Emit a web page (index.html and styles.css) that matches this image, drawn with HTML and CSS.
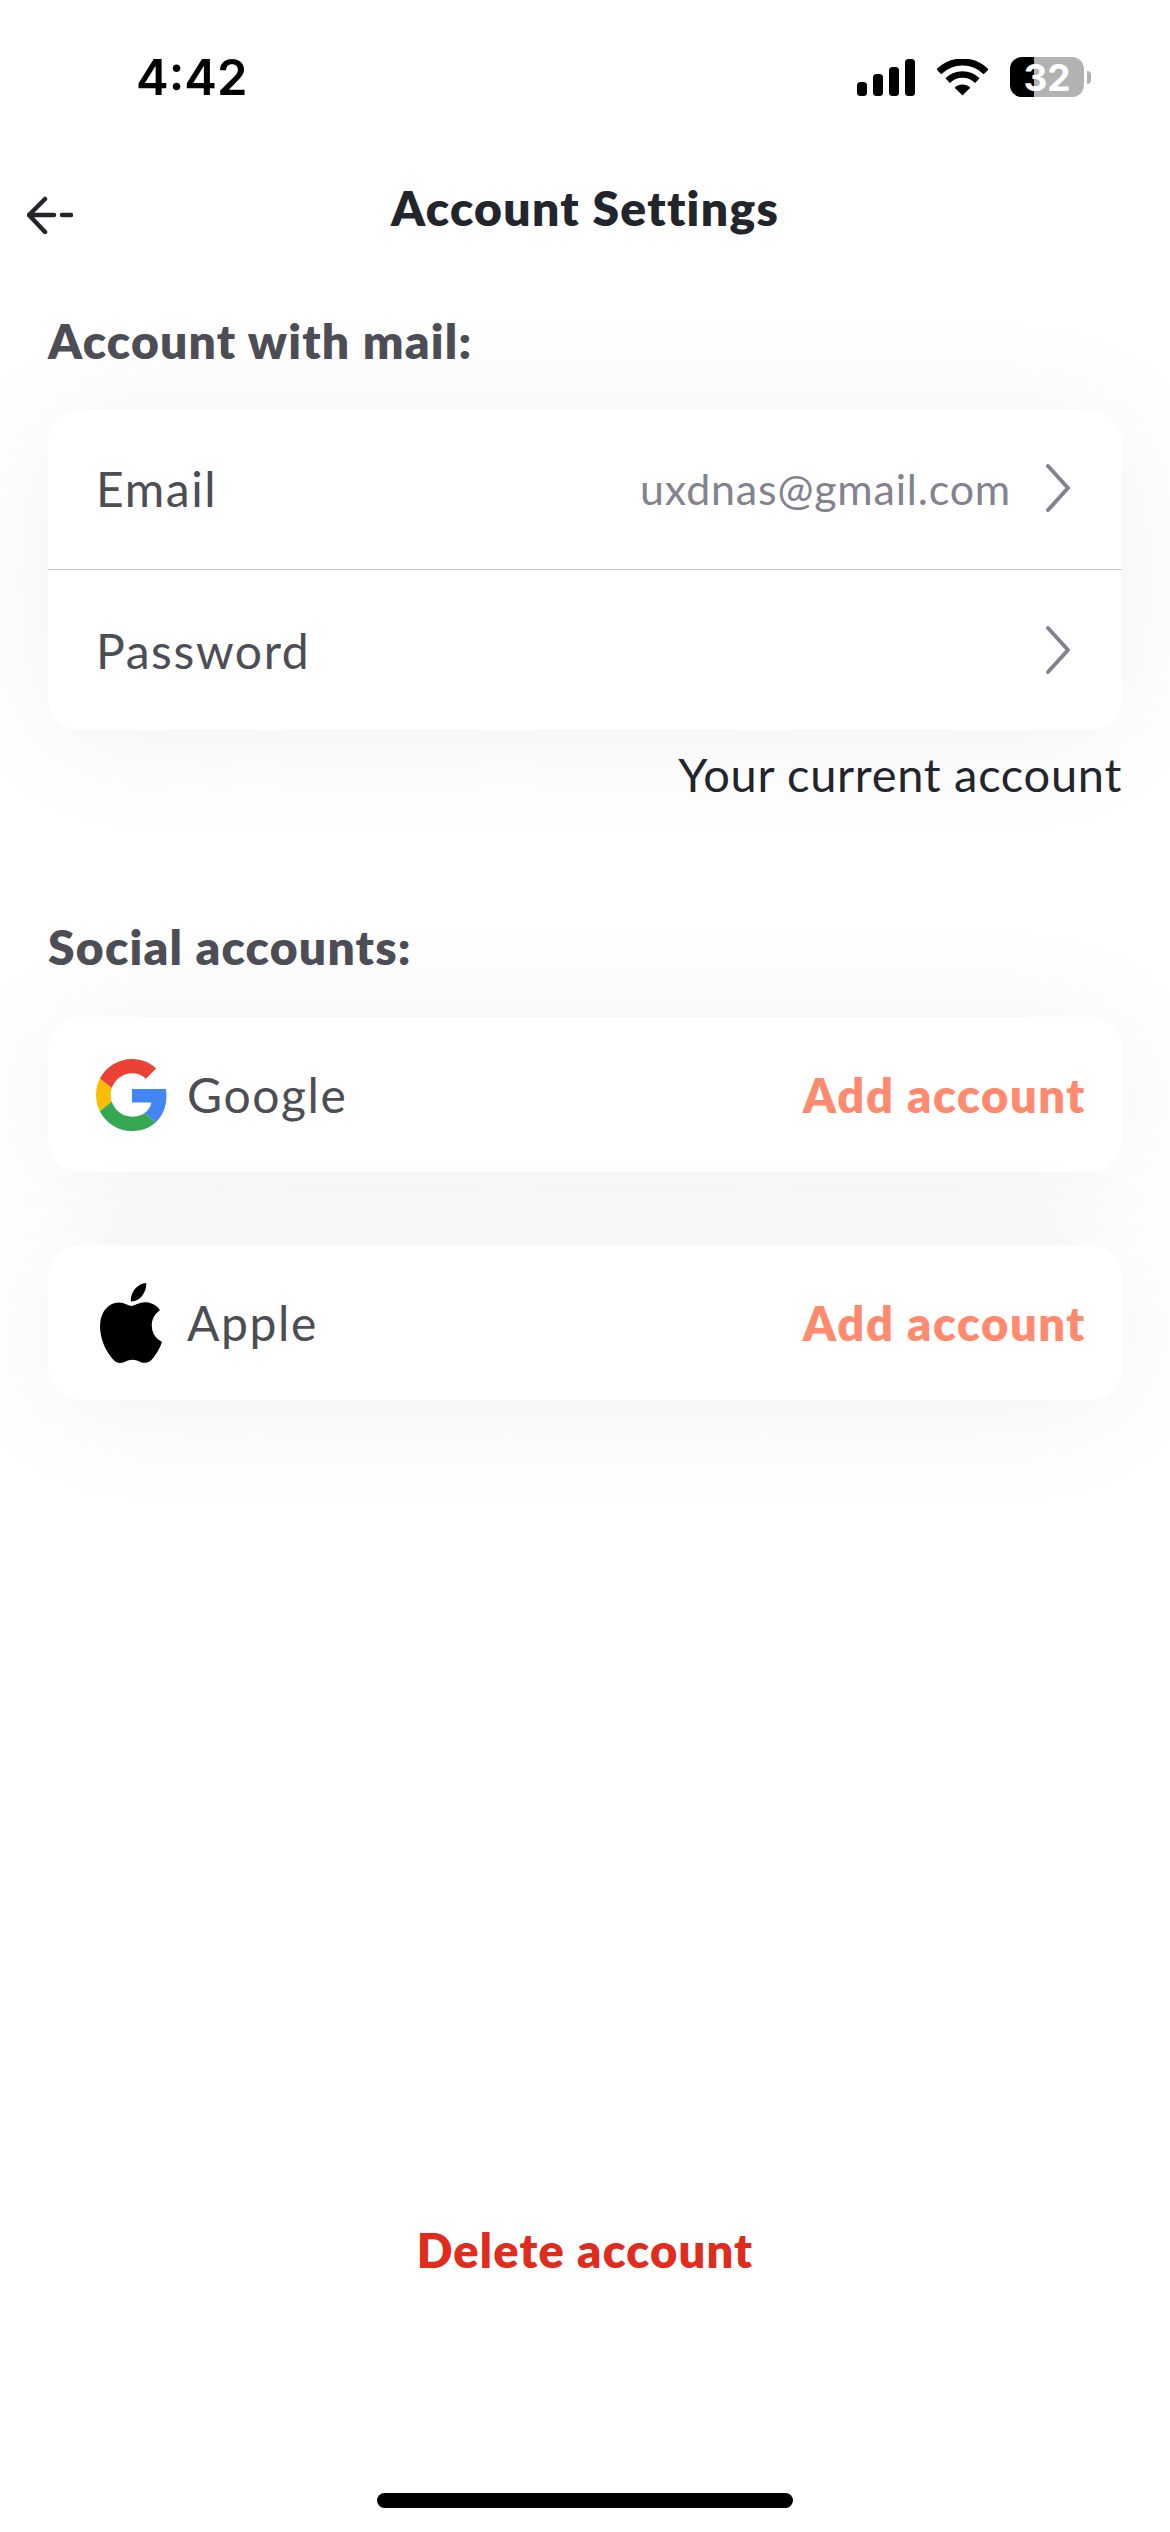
FILE: index.html
```html
<!DOCTYPE html>
<html lang="en">
<head>
  <meta charset="UTF-8" />
  <meta name="viewport" content="width=device-width, initial-scale=1" />
  <title>Account Settings</title>
  <link rel="stylesheet" href="styles.css">
</head>
<body>
  <div class="status-bar">
    <span class="time">4:42</span>
    <div class="status-icons">
      <svg class="signal" width="58" height="37" viewBox="0 0 58 37">
        <rect x="0" y="23" width="10" height="14" rx="3.5" />
        <rect x="16" y="15" width="10" height="22" rx="3.5" />
        <rect x="32" y="8" width="10" height="29" rx="3.5" />
        <rect x="48" y="0" width="10" height="37" rx="3.5" />
      </svg>
      <svg class="wifi" width="51" height="37" viewBox="0 0 51 37">
        <path d="M1.8 12.8A33.5 33.5 0 0 1 49.2 12.8" fill="none" stroke="#000" stroke-width="7" />
        <path d="M10.65 21.65A21 21 0 0 1 40.35 21.65" fill="none" stroke="#000" stroke-width="6.5" />
        <path d="M25.5 36.5L17.7 28.7A11 11 0 0 1 33.3 28.7Z" />
      </svg>
      <div class="battery">
        <div class="battery-body">
          <div class="battery-level"></div>
          <span class="battery-text">32</span>
        </div>
        <div class="battery-nub"></div>
      </div>
    </div>
  </div>

  <header class="nav">
    <svg class="back" width="46" height="38" viewBox="0 0 46 38">
      <path d="M18 3L2 19L18 36M2 19H27M35 19H44" fill="none" stroke="#22252c" stroke-width="4.5" stroke-linecap="round" stroke-linejoin="round" />
    </svg>
    <h1>Account Settings</h1>
  </header>

  <main>
    <h2 class="first">Account with mail:</h2>
    <section class="card">
      <div class="row row-line">
        <span class="label">Email</span>
        <span class="value">uxdnas@gmail.com</span>
        <svg class="chevron" width="26" height="50" viewBox="0 0 26 50">
          <path d="M3 3L23 25L3 47" fill="none" stroke="#82838f" stroke-width="4" stroke-linecap="round" stroke-linejoin="round" />
        </svg>
      </div>
      <div class="row">
        <span class="label">Password</span>
        <svg class="chevron" width="26" height="50" viewBox="0 0 26 50">
          <path d="M3 3L23 25L3 47" fill="none" stroke="#82838f" stroke-width="4" stroke-linecap="round" stroke-linejoin="round" />
        </svg>
      </div>
    </section>
    <p class="current">Your current account</p>

    <h2 class="social">Social accounts:</h2>
    <section class="card social-card">
      <svg class="logo" width="72" height="72" viewBox="0 0 48 48">
        <path fill="#EA4335" d="M24 9.5c3.54 0 6.71 1.22 9.21 3.6l6.85-6.85C35.9 2.38 30.47 0 24 0 14.62 0 6.51 5.38 2.56 13.22l7.98 6.19C12.43 13.72 17.74 9.5 24 9.5z"/>
        <path fill="#4285F4" d="M46.98 24.55c0-1.57-.15-3.09-.38-4.55H24v9.02h12.94c-.58 2.96-2.26 5.48-4.78 7.18l7.73 6c4.51-4.18 7.09-10.36 7.09-17.65z"/>
        <path fill="#FBBC05" d="M10.53 28.59c-.48-1.45-.76-2.99-.76-4.59s.27-3.14.76-4.59l-7.98-6.19C.92 16.46 0 20.12 0 24c0 3.88.92 7.54 2.56 10.78l7.97-6.19z"/>
        <path fill="#34A853" d="M24 48c6.48 0 11.93-2.13 15.89-5.81l-7.73-6c-2.15 1.45-4.92 2.3-8.16 2.3-6.26 0-11.57-4.22-13.47-9.91l-7.98 6.19C6.51 42.62 14.62 48 24 48z"/>
      </svg>
      <span class="label">Google</span>
      <span class="add">Add account</span>
    </section>
    <section class="card social-card">
      <svg class="logo logo-apple" width="76" height="80" viewBox="0 0 24 24" preserveAspectRatio="none">
        <path d="M12.152 6.896c-.948 0-2.415-1.078-3.96-1.04-2.04.027-3.91 1.183-4.961 3.014-2.117 3.675-.546 9.103 1.519 12.09 1.013 1.454 2.208 3.09 3.792 3.039 1.52-.065 2.09-.987 3.935-.987 1.831 0 2.35.987 3.96.948 1.637-.026 2.676-1.48 3.676-2.948 1.156-1.688 1.636-3.325 1.662-3.415-.039-.013-3.182-1.221-3.22-4.857-.026-3.04 2.48-4.494 2.597-4.559-1.429-2.09-3.623-2.324-4.39-2.376-2-.156-3.675 1.09-4.61 1.09zM15.53 3.83c.843-1.012 1.4-2.427 1.245-3.83-1.207.052-2.662.805-3.532 1.818-.78.896-1.454 2.338-1.273 3.714 1.338.104 2.715-.688 3.559-1.701"/>
      </svg>
      <span class="label">Apple</span>
      <span class="add">Add account</span>
    </section>
  </main>

  <footer class="bottom">
    <button class="delete">Delete account</button>
    <div class="home-bar"></div>
  </footer>
</body>
</html>
```

FILE: styles.css
```css
html, body {
  height: 100%;
}
body {
  font-family: Lato, "Open Sans", sans-serif;
  background-color: #ffffff;
  color: #4c4d55;
  margin: 0;
  padding: 0;
  display: flex;
  flex-direction: column;
  overflow: hidden;
}
.status-bar {
  height: 130px;
  display: flex;
  justify-content: space-between;
  align-items: flex-start;
  padding: 0 79px 0 136px;
  flex-shrink: 0;
}
.time {
  font-family: Inter, sans-serif;
  font-size: 49px;
  font-weight: 600;
  line-height: 56px;
  margin-top: 50px;
  color: #000;
}
.status-icons {
  display: flex;
  align-items: flex-start;
  margin-top: 59px;
}
.wifi {
  margin-left: 22px;
}
.battery {
  display: flex;
  align-items: center;
  margin-left: 22px;
  margin-top: -2px;
}
.battery-body {
  width: 74px;
  height: 40px;
  border-radius: 12px;
  background-color: #b2b2b2;
  display: flex;
  align-items: center;
  justify-content: center;
  position: relative;
}
.battery-level {
  position: absolute;
  left: 0;
  top: 0;
  bottom: 0;
  width: 24px;
  border-radius: 12px 0 0 12px;
  background-color: #000;
}
.battery-text {
  position: relative;
  font-family: Inter, sans-serif;
  font-size: 37px;
  line-height: 1;
  font-weight: 700;
  color: #fff;
}
.battery-nub {
  width: 4px;
  height: 13px;
  margin-left: 3px;
  border-radius: 0 4px 4px 0;
  background-color: #b2b2b2;
}
.nav {
  height: 158px;
  display: flex;
  align-items: center;
  justify-content: center;
  position: relative;
  flex-shrink: 0;
}
.nav h1 {
  margin: 0 0 3px;
  font-size: 48px;
  font-weight: 800;
  letter-spacing: 1.3px;
  color: #22252c;
}
.back {
  position: absolute;
  left: 27px;
  top: 66px;
}
main {
  padding: 0 48px;
  flex-shrink: 0;
}
h2 {
  margin: 0;
  font-size: 48px;
  line-height: 56px;
  font-weight: 800;
  letter-spacing: 1.2px;
  color: #4c4d55;
}
h2.first {
  margin-top: 25px;
  margin-bottom: 41px;
}
h2.social {
  margin-bottom: 42px;
}
.card {
  background-color: #fff;
  border-radius: 32px;
  box-shadow: 0 8px 130px rgba(0, 0, 0, 0.06);
}
.row {
  height: 160px;
  display: flex;
  align-items: center;
  padding: 0 51px 0 48px;
  box-sizing: border-box;
}
.row-line {
  padding-bottom: 3px;
  border-bottom: 1px solid #c9c9cb;
}
.label {
  font-size: 48px;
  letter-spacing: 1.6px;
  color: #4c4d55;
}
.value {
  margin-left: auto;
  font-size: 43px;
  letter-spacing: 0.8px;
  color: #82838f;
}
.row .chevron {
  margin-left: 34px;
}
.row .label + .chevron {
  margin-left: auto;
}
.current {
  margin: 16px 0 117px;
  text-align: right;
  font-size: 47px;
  line-height: 56px;
  letter-spacing: 0.7px;
  color: #22252c;
}
.social-card {
  height: 155px;
  display: flex;
  align-items: center;
  padding: 0 36px 0 48px;
  margin-bottom: 73px;
}
.logo {
  flex-shrink: 0;
  margin-right: 19px;
}
.logo-apple {
  margin-left: -3px;
  margin-right: 18px;
}
.add {
  margin-left: auto;
  font-size: 47px;
  font-weight: 800;
  letter-spacing: 1.6px;
  color: #ff8a6e;
}
.bottom {
  flex: 1;
  display: flex;
  flex-direction: column;
  align-items: center;
  justify-content: flex-end;
}
.delete {
  border: none;
  background: none;
  padding: 0;
  font-family: inherit;
  font-size: 47px;
  font-weight: 800;
  letter-spacing: 1.2px;
  color: #e02b1d;
  margin-bottom: 215px;
}
.home-bar {
  width: 416px;
  height: 15px;
  border-radius: 8px;
  background-color: #000;
  margin-bottom: 24px;
}
```
